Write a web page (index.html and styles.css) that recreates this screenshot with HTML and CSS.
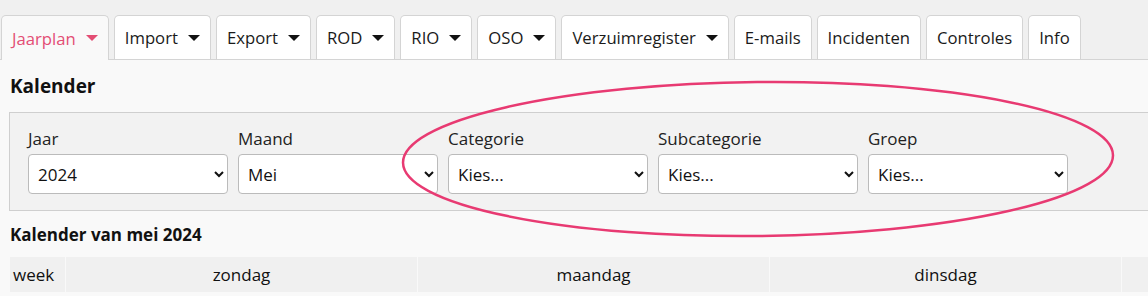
FILE: index.html
```html
<!DOCTYPE html>
<html lang="nl">
<head>
    <meta charset="UTF-8">
    <meta name="viewport" content="width=device-width, initial-scale=1.0">
    <title>Jaarplan - Kalender</title>
    <link rel="stylesheet" href="styles.css">
</head>
<body>
    <div class="pagina">
        <ul class="tabs">
            <li class="tab actief">Jaarplan <span class="pijl"></span></li>
            <li class="tab">Import <span class="pijl"></span></li>
            <li class="tab">Export <span class="pijl"></span></li>
            <li class="tab">ROD <span class="pijl"></span></li>
            <li class="tab">RIO <span class="pijl"></span></li>
            <li class="tab">OSO <span class="pijl"></span></li>
            <li class="tab">Verzuimregister <span class="pijl"></span></li>
            <li class="tab">E-mails</li>
            <li class="tab">Incidenten</li>
            <li class="tab">Controles</li>
            <li class="tab">Info</li>
        </ul>

        <div class="inhoud">
            <h1>Kalender</h1>

            <div class="filters">
                <div class="veld">
                    <label>Jaar</label>
                    <select><option>2024</option></select>
                </div>
                <div class="veld">
                    <label>Maand</label>
                    <select><option>Mei</option></select>
                </div>
                <div class="veld">
                    <label>Categorie</label>
                    <select><option>Kies...</option></select>
                </div>
                <div class="veld">
                    <label>Subcategorie</label>
                    <select><option>Kies...</option></select>
                </div>
                <div class="veld">
                    <label>Groep</label>
                    <select><option>Kies...</option></select>
                </div>
            </div>

            <h2>Kalender van mei 2024</h2>

            <table class="kalender">
                <thead>
                    <tr>
                        <th class="week">week</th>
                        <th>zondag</th>
                        <th>maandag</th>
                        <th>dinsdag</th>
                        <th></th>
                    </tr>
                </thead>
            </table>
        </div>

        <!-- markering rond de nieuwe filters -->
        <svg class="markering" width="760" height="170" viewBox="0 0 760 170">
            <ellipse cx="380" cy="85" rx="355" ry="77" fill="none" stroke="#e83a72" stroke-width="2.5" transform="rotate(-0.6 380 85)"/>
        </svg>
    </div>
</body>
</html>
```

FILE: styles.css
```css
body {
    margin: 0;
    font-family: "Open Sans", "Noto Sans", sans-serif;
    font-size: 17px;
    background-color: #f9f9f9;
    color: #111;
    overflow: hidden;
}
.pagina {
    position: relative;
    width: 1500px;
}
.tabs {
    display: flex;
    gap: 5px;
    margin: 0;
    padding: 15px 0 0 1px;
    list-style: none;
    background-color: #f0f0f0;
    border-bottom: 1px solid #d4d4d4;
}
.tab {
    display: flex;
    align-items: center;
    gap: 10px;
    height: 43px;
    padding: 0 10px;
    margin-bottom: -1px;
    background-color: #fff;
    border: 1px solid #d4d4d4;
    border-bottom: none;
    border-radius: 5px 5px 0 0;
    font-size: 16.7px;
    color: #1a1a1a;
}
.tab.actief {
    background-color: #f9f9f9;
    color: #e34d74;
    height: 44px;
}
.pijl {
    width: 0;
    height: 0;
    border-left: 6px solid transparent;
    border-right: 6px solid transparent;
    border-top: 6px solid #111;
}
.actief .pijl {
    border-top-color: #e34d74;
}
.inhoud {
    padding: 0 9px;
}
h1 {
    margin: 0;
    padding: 14px 1px;
    font-size: 19px;
    line-height: 24px;
    font-weight: bold;
}
.filters {
    display: flex;
    gap: 10px;
    padding: 15px 18px 16px;
    background-color: #f2f2f2;
    border: 1px solid #cfcfcf;
}
.veld {
    display: flex;
    flex-direction: column;
    gap: 4px;
}
.veld label {
    line-height: 22px;
    color: #222;
}
.veld select {
    width: 200px;
    height: 40px;
    padding: 0 5px;
    font-family: inherit;
    font-size: 17px;
    color: #111;
    background-color: #fff;
    border: 1px solid #bbb;
    border-radius: 4px;
}
h2 {
    margin: 0;
    padding: 14px 1px 12px;
    font-size: 17px;
    line-height: 20px;
    font-weight: bold;
}
.kalender {
    border-collapse: separate;
    border-spacing: 1px 0;
}
.kalender th {
    width: 351px;
    height: 35px;
    padding: 0;
    background-color: #f0f0f0;
    font-weight: normal;
    text-align: center;
}
.kalender th.week {
    width: 52px;
    padding-left: 3px;
    text-align: left;
}
.markering {
    position: absolute;
    left: 378px;
    top: 74px;
}
```
